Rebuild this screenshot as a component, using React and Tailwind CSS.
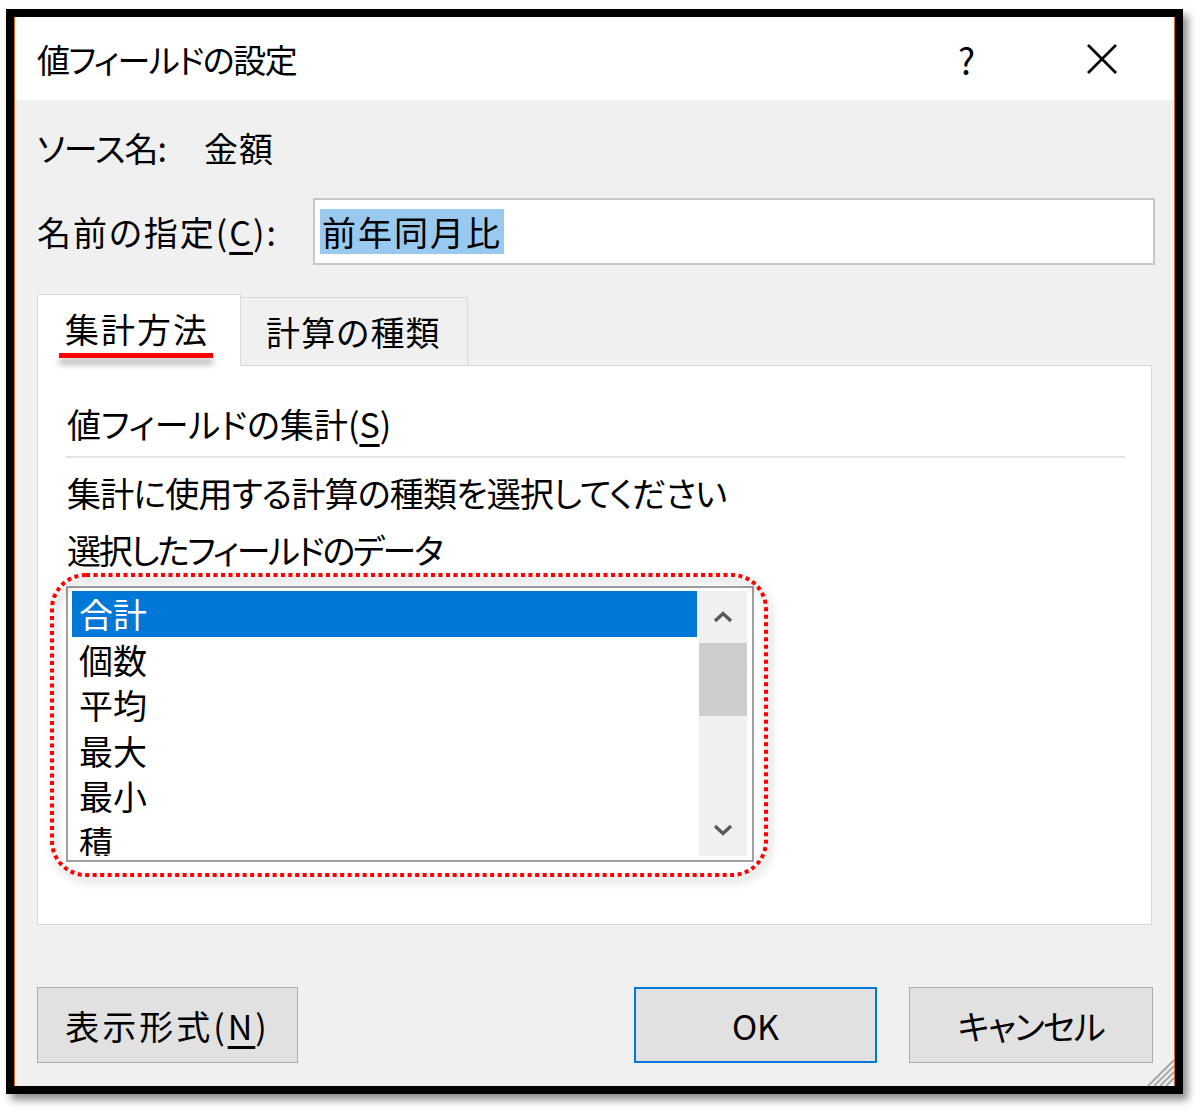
import React from "react";

const font = "font-['Noto_Sans_CJK_JP','Noto_Sans',sans-serif] [font-feature-settings:'palt']";

function Chevron({ up }) {
  return (
    <svg width="20" height="12" viewBox="0 0 20 12">
      <polyline
        points={up ? "2,10 10,2.5 18,10" : "2,2 10,9.5 18,2"}
        fill="none"
        stroke="#5a5a5a"
        strokeWidth="3.4"
      />
    </svg>
  );
}

function ListBox() {
  const items = ["合計", "個数", "平均", "最大", "最小", "積"];
  return (
    <div className="w-[688px] h-[276px] border-2 border-[#a0a0a0] bg-white flex pl-[4px] pr-[5px] pt-[3px] pb-[4px]">
      <div className="flex-1 overflow-hidden">
        {items.map((it, i) => (
          <div
            key={it}
            className={
              i === 0
                ? "h-[45.5px] leading-[45.5px] pl-[7px] bg-[#0078d7] text-white"
                : "h-[45.5px] leading-[45.5px] pl-[7px] text-black"
            }
          >
            {it}
          </div>
        ))}
      </div>
      <div className="w-[48px] ml-[2px] bg-[#f0f0f0] flex flex-col">
        <div className="h-[52px] flex items-center justify-center">
          <Chevron up />
        </div>
        <div className="h-[73px] bg-[#cdcdcd]" />
        <div className="flex-1" />
        <div className="h-[50px] flex items-center justify-center pb-[2px]">
          <Chevron />
        </div>
      </div>
    </div>
  );
}

function Btn({ children, primary, w }) {
  return (
    <div
      className={
        (primary ? "border-2 border-[#0078d7] " : "border border-[#adadad] ") +
        "h-[76px] bg-[#e1e1e1] flex items-center justify-center text-[34px] " +
        w
      }
    >
      {children}
    </div>
  );
}

export default function App() {
  return (
    <div className={"min-h-[1111px] bg-white pl-[6px] pt-[9px] text-black " + font}>
      <div className="w-[1177px] h-[1085px] border-[8px] border-black shadow-[5px_6px_8px_rgba(0,0,0,0.45)] bg-white">
        <div className="h-full border-x border-[#d8691c] flex flex-col relative">
          {/* title bar */}
          <div className="h-[83px] bg-white flex items-center pl-[22px] pr-[56px]">
            <div className="text-[33px] leading-[40px] tracking-[-1.5px]">値フィールドの設定</div>
            <div className="ml-auto text-[36px] leading-[40px] mr-[111px]">?</div>
            <svg width="32" height="32" viewBox="0 0 32 32">
              <line x1="2" y1="2" x2="30" y2="30" stroke="#000" strokeWidth="2.6" />
              <line x1="30" y1="2" x2="2" y2="30" stroke="#000" strokeWidth="2.6" />
            </svg>
          </div>

          {/* body */}
          <div className="flex-1 bg-[#f0f0f0] pl-[22px] pr-[19px] flex flex-col text-[34px]">
            <div className="mt-[28px] h-[40px] leading-[40px] flex">
              <span className="tracking-[-1px]">ソース名:</span>
              <span className="ml-[38px] tracking-[1px]">金額</span>
            </div>

            <div className="mt-[30px] flex items-center">
              <div className="w-[276px] leading-[40px] tracking-[2px]">
                名前の指定(<span className="underline underline-offset-[6px]">C</span>):
              </div>
              <div className="flex-1 h-[67px] border-2 border-[#c8c8c8] bg-white flex items-center pl-[5px]">
                <span className="bg-[#99c9ef] h-[45px] leading-[45px] px-[2px] tracking-[2px]">前年同月比</span>
              </div>
            </div>

            <div className="mt-[29px] mr-[3px] flex items-end">
              <div className="relative z-10 -mb-px w-[204px] h-[72px] bg-white border border-b-0 border-[#d9d9d9] pl-[27px] pt-[14px] leading-[40px] tracking-[2px]">
                集計方法
                <div className="absolute left-[21px] top-[58px] w-[154px] h-[5px] bg-[#ff0000] shadow-[0_6px_6px_rgba(0,0,0,0.35)]" />
              </div>
              <div className="w-[227px] h-[68px] bg-[#f0f0f0] border border-l-0 border-b-0 border-[#d9d9d9] pl-[25px] pt-[14px] leading-[40px] tracking-[1.2px]">
                計算の種類
              </div>
            </div>

            <div className="mr-[3px] h-[560px] bg-white border border-[#d9d9d9] relative pl-[28px] pr-[26px] flex flex-col">
              <div className="mt-[38px] h-[40px] leading-[40px] pl-[1px]">
                値フィールドの集計(<span className="underline underline-offset-[6px]">S</span>)
              </div>
              <div className="mt-[12px] h-[2px] bg-[#e3e3e3]" />
              <div className="mt-[15px] h-[40px] leading-[40px] pl-[1px] tracking-[-0.8px]">
                集計に使用する計算の種類を選択してください
              </div>
              <div className="mt-[17px] h-[40px] leading-[40px] pl-[1px] tracking-[-2.2px]">
                選択したフィールドのデータ
              </div>
              <div className="mt-[16px]">
                <ListBox />
              </div>
              <svg
                className="absolute left-[12px] top-[207px] drop-shadow-[3px_5px_4px_rgba(0,0,0,0.35)]"
                width="720"
                height="306"
                viewBox="0 0 720 306"
              >
                <rect
                  x="2"
                  y="2"
                  width="714"
                  height="300"
                  rx="34"
                  fill="none"
                  stroke="#ff0000"
                  strokeWidth="4"
                  strokeDasharray="4 3.5"
                />
              </svg>
            </div>

            <div className="mt-[62px] mr-[2px] flex">
              <Btn w="w-[261px]">
                <span className="tracking-[3px]">
                  表示形式(<span className="underline underline-offset-[6px]">N</span>)
                </span>
              </Btn>
              <div className="ml-auto" />
              <Btn primary w="w-[243px]">OK</Btn>
              <div className="w-[32px]" />
              <Btn w="w-[244px]">
                <span className="tracking-[-1.5px]">キャンセル</span>
              </Btn>
            </div>
          </div>

          <svg className="absolute right-0 bottom-0" width="30" height="30" viewBox="0 0 30 30">
            <line x1="30" y1="4" x2="4" y2="30" stroke="#a8a8a8" strokeWidth="2" />
            <line x1="30" y1="10" x2="10" y2="30" stroke="#a8a8a8" strokeWidth="2" />
            <line x1="30" y1="16" x2="16" y2="30" stroke="#a8a8a8" strokeWidth="2" />
            <line x1="30" y1="22" x2="22" y2="30" stroke="#a8a8a8" strokeWidth="2" />
          </svg>
        </div>
      </div>
    </div>
  );
}
